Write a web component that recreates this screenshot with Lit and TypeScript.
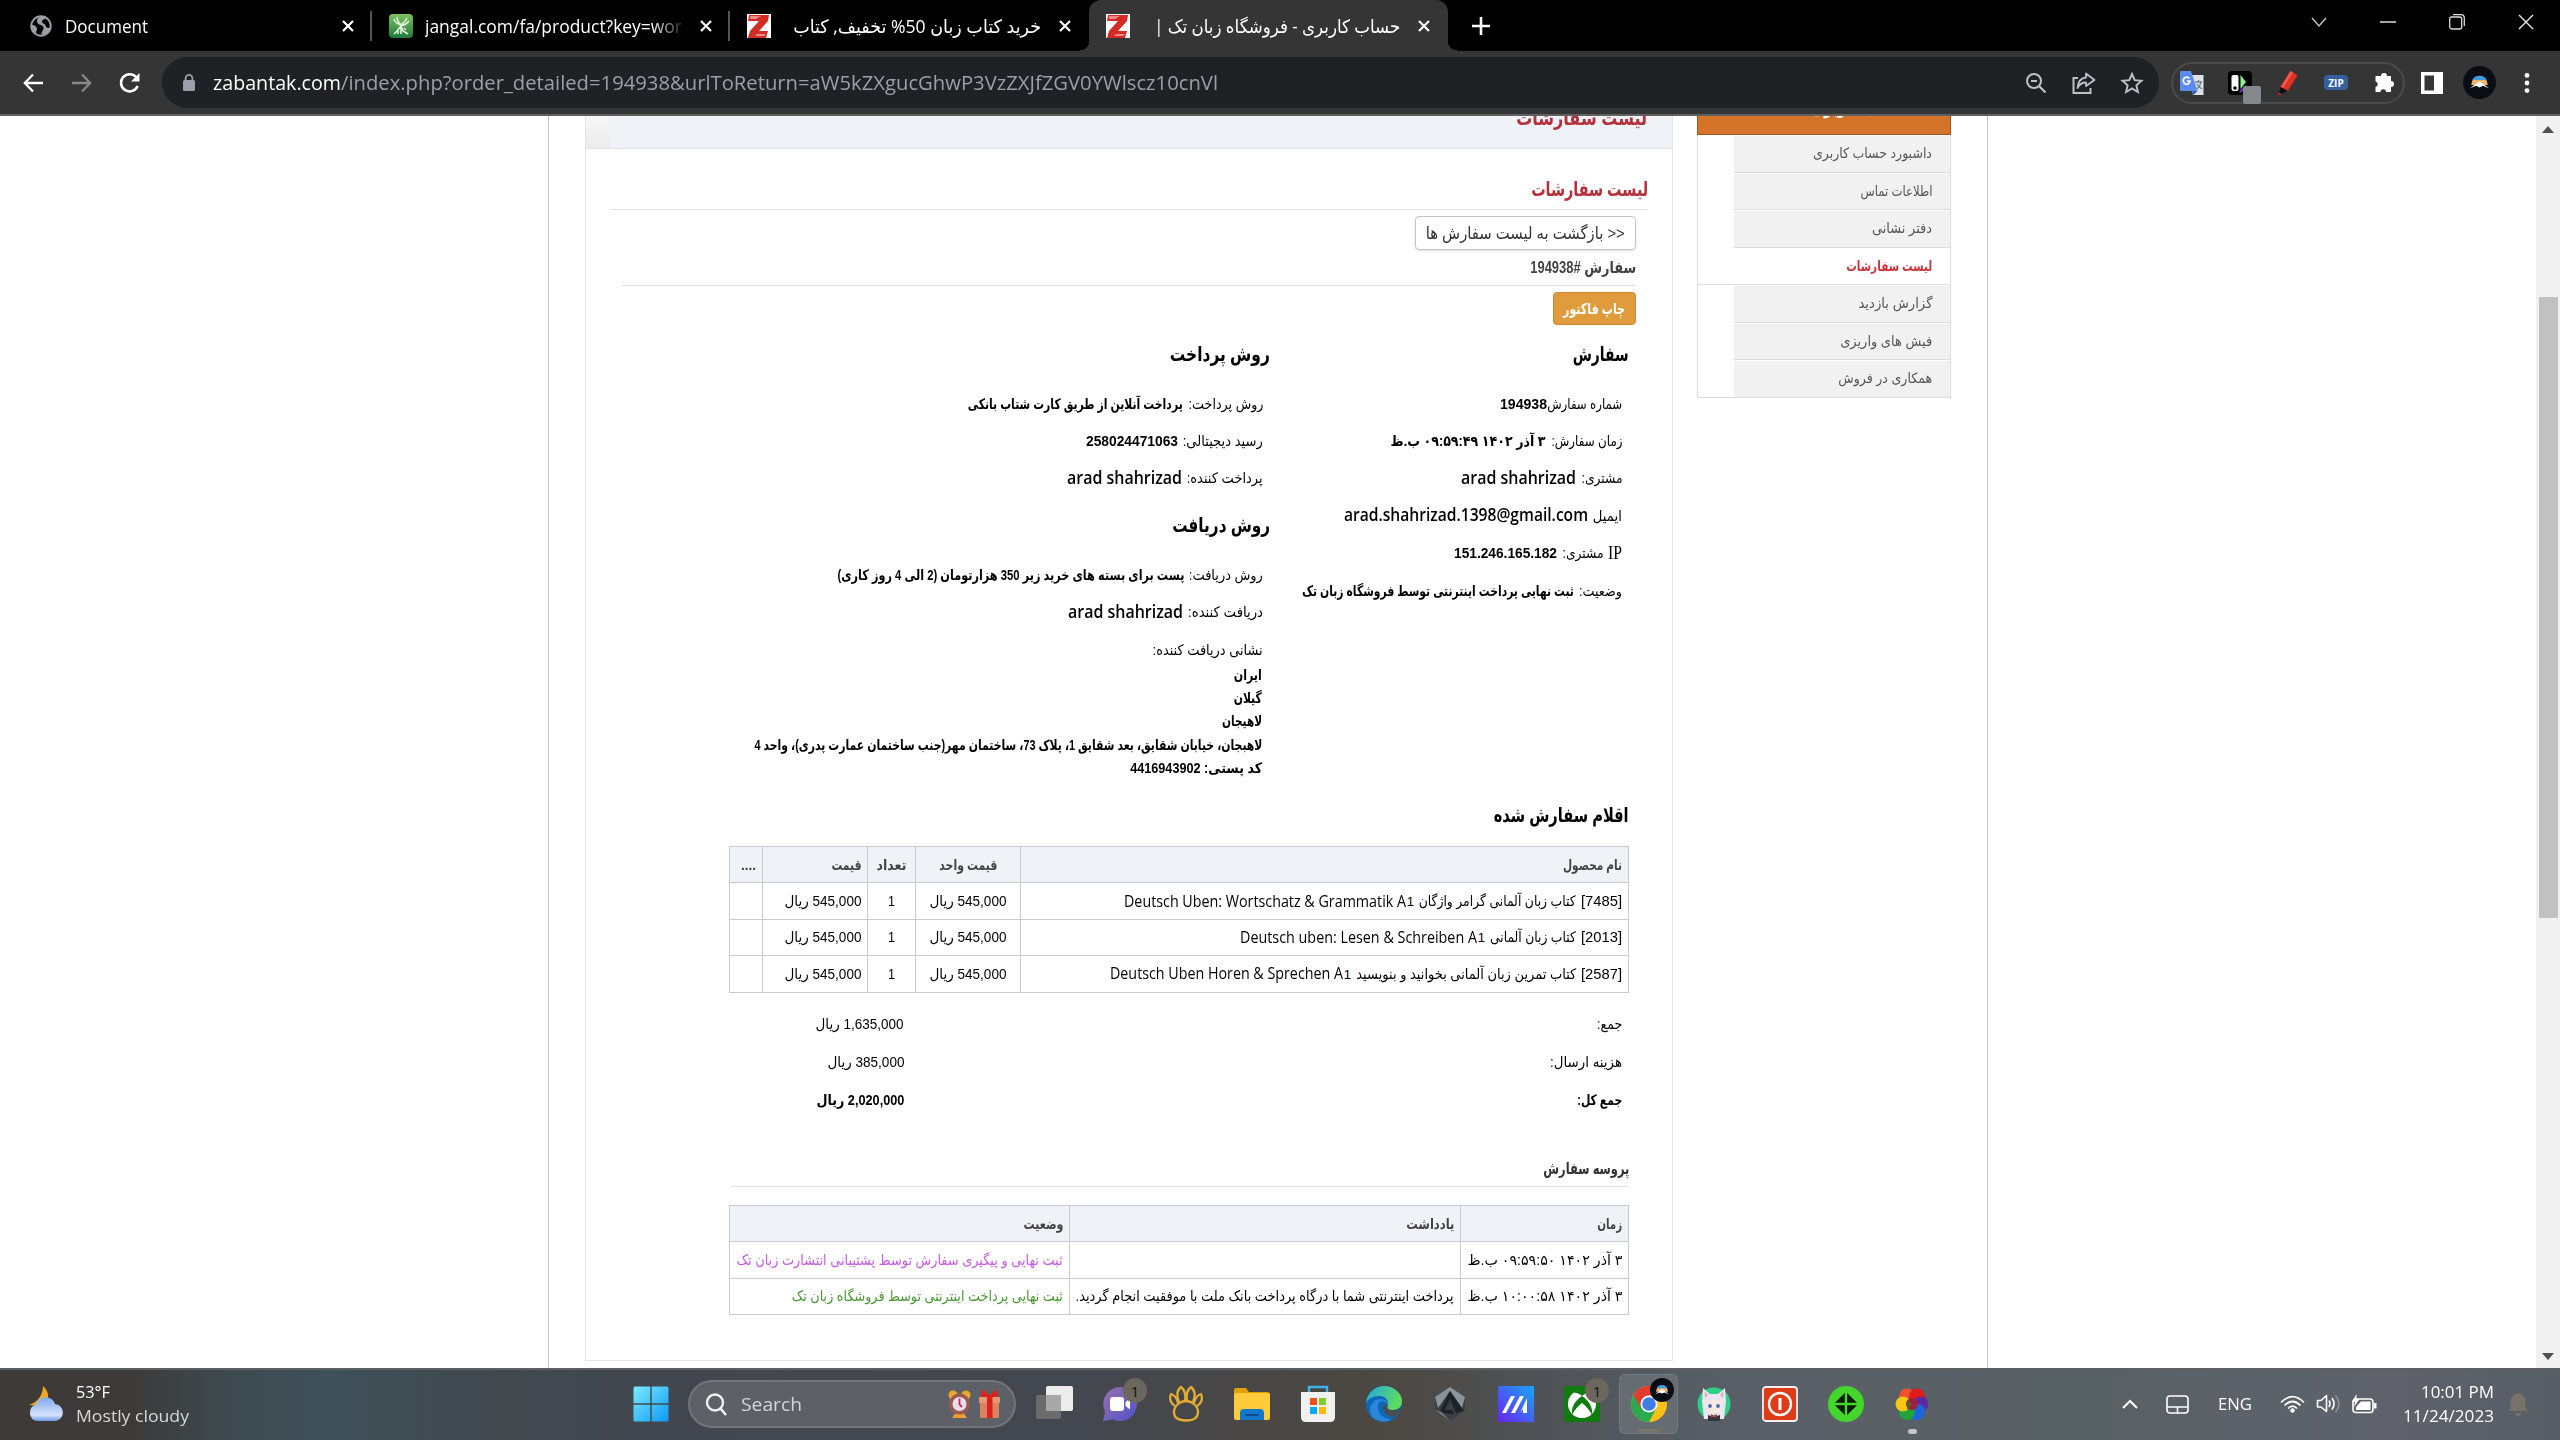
import { LitElement, html, css, svg, nothing } from "lit";
import { customElement, property, query } from "lit/decorators.js";

/** Text squeezed or stretched horizontally to an exact width. */
@customElement("fit-text")
class FitText extends LitElement {
  @property({ type: Number }) w = 0;
  @property() text = "";
  @query("span") inner!: HTMLSpanElement;
  static styles = css`
    :host { display: block; flex: none; white-space: nowrap; }
    span { display: inline-block; white-space: pre; transform-origin: 0 50%; }
    :host([dir="rtl"]) span { transform-origin: 100% 50%; }
  `;
  updated() {
    this.style.width = `${this.w}px`;
    this.fit();
    document.fonts.ready.then(() => this.fit());
  }
  fit() {
    this.inner.style.transform = "none";
    const n = this.inner.getBoundingClientRect().width;
    if (n > 0) this.inner.style.transform = `scaleX(${this.w / n})`;
  }
  render() { return html`<span>${this.text}</span>`; }
}

const fa = (text: string, w: number, cls = "") => html`<fit-text dir="rtl" class=${cls} .w=${w} .text=${text}></fit-text>`;
const en = (text: string, w: number, cls = "") => html`<fit-text dir="ltr" class=${cls} .w=${w} .text=${text}></fit-text>`;
const icon = (w: number, h: number, body: unknown, cls = "") =>
  html`<svg class="ic ${cls}" width=${w} height=${h} viewBox="0 0 ${w} ${h}" fill="none">${body}</svg>`;

const closeX = () => icon(14, 14, svg`<path d="M2 2L12 12M12 2L2 12" stroke="#fff" stroke-width="2.2"/>`);
const zLogo = () => icon(24, 24, svg`
  <rect width="24" height="24" fill="#fff"/>
  <path d="M2 1H22L21 7L12 17H21L19 24H1L3 17L12 7H1Z" fill="#d32b26"/>
  <path d="M3 2H14L9 5H3ZM10 20H19L17 22L8 22Z" fill="#f08a84"/>`);
const avatar = (r: number) => svg`
  <circle cx=${r} cy=${r} r=${r} fill="#0b0d14"/>
  <path d="M${r * 0.5} ${r * 1.15}A${r * 0.5} ${r * 0.55} 0 0 1 ${r * 1.5} ${r * 1.15}Z" fill="#efb36a"/>
  <path d="M${r * 0.56} ${r * 0.85}A${r * 0.5} ${r * 0.5} 0 0 1 ${r * 1.44} ${r * 0.85}Z" fill="#3f9be0"/>
  <path d="M${r * 0.42} ${r * 1.35}L${r} ${r * 0.92}L${r * 1.58} ${r * 1.35}L${r * 1.2} ${r * 1.2}L${r} ${r * 1.3}L${r * 0.8} ${r * 1.2}Z" fill="#fff"/>`;

const MENU: [string, number][] = [
  ["داشبورد حساب کاربری", 119], ["اطلاعات تماس", 72], ["دفتر نشانی", 60], ["لیست سفارشات", 86],
  ["گزارش بازدید", 74], ["فیش های واریزی", 92], ["همکاری در فروش", 94],
];

const ITEMS: [string, string, number, string, number][] = [
  ["[7485]", "کتاب زبان آلمانی گرامر واژگان", 157, "Deutsch Uben: Wortschatz & Grammatik A", 282],
  ["[2013]", "کتاب زبان آلمانی", 86, "Deutsch uben: Lesen & Schreiben A", 237],
  ["[2587]", "کتاب تمرین زبان آلمانی بخوانید و بنویسید", 220, "Deutsch Uben Horen & Sprechen A", 233],
];

@customElement("app-root")
class AppRoot extends LitElement {
  static styles = css`
    :host { display: block; width: 2560px; height: 1440px; overflow: hidden; background: #fff;
      font-family: "Liberation Sans", "DejaVu Sans", sans-serif; color: #000; }
    * { box-sizing: border-box; }
    .ic { display: block; flex: none; overflow: visible; }
    .screen { display: flex; flex-direction: column; height: 1440px; }
    .ui { font-family: "Open Sans", "DejaVu Sans", sans-serif; }

    /* tab strip */
    .tabs { height: 51px; background: #000; display: flex; align-items: stretch; color: #fff; padding-left: 12px; font-size: 18.5px; flex: none; }
    .tab { display: flex; align-items: center; width: 359px; padding: 0 17px 0 17px; flex: none; }
    .tab.first { width: 360px; }
    .tab.second { width: 358px; }
    .tab .grow { flex: 1; }
    .tab fit-text { margin-left: 12px; }
    .tab.sep { background: linear-gradient(#555, #555) right 0 top 11px / 2px 30px no-repeat; }
    .tab.fa fit-text { margin: 0 17px 0 0; }
    .tab.on { background: #353535; border-radius: 12px 12px 0 0; position: relative; }
    .tab.on::before, .tab.on::after { content: ""; position: absolute; bottom: 0; width: 9px; height: 10px; }
    .tab.on::before { left: -9px; background: radial-gradient(circle at 0 0, #0000 9px, #353535 9.5px); }
    .tab.on::after { right: -9px; background: radial-gradient(circle at 100% 0, #0000 9px, #353535 9.5px); }
    .fade { -webkit-mask-image: linear-gradient(90deg, #000 88%, #0002); }
    .plus { align-self: center; margin-left: 24px; }
    .wins { margin-left: auto; display: flex; align-items: center; gap: 53px; padding: 0 26px 7px 0; }

    /* toolbar */
    .bar { height: 65px; background: #353535; border-bottom: 2px solid #606060; display: flex; align-items: center; flex: none; }
    .nav { width: 162px; display: flex; padding-left: 23px; gap: 27px; flex: none; }
    .omni { width: 1997px; height: 51px; border-radius: 26px; background: #202124; display: flex; align-items: center; padding: 0 16px 0 20px; font-size: 20px; color: #9aa0a6; flex: none; }
    .omni .host { color: #fff; margin-left: 17px; }
    .omni .tools { margin-left: auto; display: flex; align-items: center; gap: 25px; }
    .ext { margin-left: 12px; width: 234px; height: 42px; border: 2px solid #4b4b4b; border-radius: 21px; display: flex; align-items: center; gap: 24px; padding-left: 7px; flex: none; }
    .zip { width: 24px; height: 15px; border-radius: 4px; background: #34609f; color: #fff; font-weight: 700; font-size: 10px; display: flex; align-items: center; justify-content: center; }
    .tail { display: flex; align-items: center; padding-left: 16px; gap: 20px; }
    .dots { margin-left: 8px; }

    /* page */
    .page { flex: 1; background: #fff; overflow: hidden; min-height: 0; display: flex; }
    .pagewrap { display: flex; width: 2560px; padding-left: 548px; }
    .frame { direction: rtl; width: 1440px; margin-right: auto; border: solid #c5c5cb; border-width: 0 1px; display: flex; padding-right: 36px; flex: none; }
    .scroll { width: 24px; background: #f1f1f1; display: flex; flex-direction: column; align-items: center; padding: 10px 0 8px; flex: none; }
    .thumb { width: 19px; height: 621px; background: #c1c1c1; margin: 164px 0 auto; }
    .side { width: 254px; height: 282px; border: 1px solid #dcdcdc; border-top: 0; margin-left: 24px; flex: none; }
    .sidehead { height: 19px; margin: 0 -1px; background: #d4732a; border: 1px solid #a0541a; border-top: 0; overflow: hidden; color: #fff; font-weight: 700; font-size: 18px; }
    .sidehead fit-text { margin: -19px 43px 0 0; line-height: 22px; }
    .mi { height: 37.5px; display: flex; align-items: center; padding: 0 18px 0 0; margin-left: 36px; background: #f1f1f1; border-bottom: 1px solid #dcdcdc; box-shadow: inset 0 1px #fff; font-size: 14px; color: #555; }
    .mi.sel { margin-left: 0; background: #fff; color: #cb3439; font-weight: 700; }
    .panel { width: 1088px; height: 1245px; border: 1px solid #e3e3ea; border-top: 0; display: flex; flex-direction: column; flex: none; }
    .phead { height: 33px; background: linear-gradient(#f7f7f7, #ebebeb) left / 24px 100% no-repeat, #eff3f7; border-bottom: 1px solid #e3e3ea; flex: none; padding-right: 25px; overflow: hidden; }
    .phead fit-text { margin-top: -10px; }
    .red { color: #b5303a; font-weight: 700; font-size: 20px; line-height: 24px; }
    .pt { height: 61px; margin: 0 24px 0 24px; border-bottom: 1px solid #e3e3e3; padding-top: 28px; flex: none; }
    .sub { margin: 6px 36px 0 36px; display: flex; flex-direction: column; align-items: flex-start; flex: none; }
    .btn { height: 34px; width: 221px; border: 1px solid #c4c4c4; border-radius: 4px; box-shadow: 0 1px 2px #0002; color: #333; display: flex; align-items: center; justify-content: center; font-size: 17px; }
    .ord { height: 36px; align-self: stretch; border-bottom: 1px solid #e3e3e3; padding-top: 7px; font-weight: 700; color: #444; font-size: 16px; line-height: 22px; }
    .print { width: 83px; height: 33px; margin-top: 6px; border: 1px solid #cd8730; border-radius: 4px; background: #e09b3d; color: #fff; font-weight: 700; font-size: 15px; display: flex; align-items: center; justify-content: center; }
    .body { margin: 0 43px 0 144px; flex: none; }
    .h { font-weight: 700; font-size: 20px; display: flex; align-items: center; height: 34px; padding-bottom: 2px; }
    .h.second { margin-top: 12px; }
    .cols { display: flex; height: 474px; padding-top: 13px; }
    .c1 { width: 359px; }
    .c2 { width: 540px; }
    .r { display: flex; align-items: center; height: 37.4px; padding-right: 7px; gap: 5px; font-size: 14.5px; }
    .r.tight { gap: 0; }
    .rows { padding-top: 13px; }
    .b { font-weight: 700; }
    .serif { font-family: "Liberation Serif", serif; font-size: 18px; }
    .lat { font-family: "Open Sans", sans-serif; font-weight: 600; font-size: 18px; padding-bottom: 3px; }
    .addr { margin-top: -5px; }
    .a { display: flex; align-items: center; height: 23.2px; padding-right: 8px; font-size: 14.5px; }
    table { border-collapse: collapse; table-layout: fixed; width: 899px; direction: rtl; font-size: 14.5px; }
    td, th { border: 1px solid #c8cace; padding: 0 6px; height: 36.4px; }
    th { background: #eff3f7; color: #444; font-weight: 700; }
    .cell { display: flex; align-items: center; gap: 5px; height: 24px; }
    .cell.mid { justify-content: center; }
    .cell .l { font-family: "Open Sans", sans-serif; font-size: 17px; padding-bottom: 2px; }
    .cell .cat { display: flex; direction: ltr; align-items: center; gap: 1px; }
    .one { font-size: 13px; padding-top: 1px; }
    .tot { display: grid; grid-template-columns: 718px auto; align-items: center; height: 37.8px; padding: 0 7px 0 0; font-size: 14.5px; }
    .proc { height: 50px; margin-top: 18px; margin-bottom: 18px; border-bottom: 1px solid #e3e3e3; font-weight: 700; font-size: 16px; color: #333; display: flex; align-items: center; padding-top: 15px; }
    .items { margin-top: 13px; }
    .totals { padding-top: 13px; }
    .v { color: #c858e6; }
    .g { color: #4a9632; }

    /* taskbar */
    .task { height: 72px; flex: none; border-top: 2px solid #5d6063; padding-bottom: 2px; color: #fff; display: flex; align-items: center;
      background: linear-gradient(90deg, #3e3a38 0, #3d3a39 130px, #3e4a50 230px, #3f5059 330px, #40494f 470px, #42464e 650px, #43474f 1080px, #4a4744 1280px, #4c4843 1400px, #4f5357 1540px, #596068 1750px, #586163 2080px, #5b626a 2260px, #5f626b 2400px, #565e66 2560px); }
    .wx { width: 618px; display: flex; align-items: center; padding-left: 28px; gap: 11px; font-size: 17px; line-height: 24px; color: #d8d8d8; flex: none; }
    .wx .t { color: #fff; }
    .cellt { width: 66px; height: 62px; display: flex; align-items: center; justify-content: center; position: relative; flex: none; }
    .search { width: 328px; height: 48px; margin: 0 5px 0 4px; border-radius: 24px; background: #5e6067; border: 2px solid #73757b; display: flex; align-items: center; padding: 0 14px 0 14px; font-size: 19px; color: #d5d5d5; flex: none; }
    .search fit-text { margin-left: 14px; }
    .search .pics { margin-left: auto; display: flex; gap: 8px; }
    .active { background: #666c72; border-radius: 6px; width: 59px; height: 60px; margin: 0 3px 0 4px; box-shadow: inset 0 0 0 1px #737980; }
    .badge { position: absolute; left: 36px; top: 5px; width: 24px; height: 25px; border-radius: 50%; background: #6b675c; color: #111; font-size: 15px; display: flex; align-items: center; justify-content: center; }
    .av { position: absolute; left: 31px; top: 4px; }
    .run { position: absolute; left: 18px; bottom: 1px; width: 23px; height: 4px; border-radius: 2px; background: #7a7568; }
    .dot { position: absolute; left: 29px; bottom: 1px; width: 9px; height: 5px; border-radius: 3px; background: #c3c6c8; }
    .tray { margin-left: auto; display: flex; align-items: center; padding-right: 32px; font-size: 17px; line-height: 24px; }
    .pad { margin-left: 28px; }
    .lang { margin: 0 28px 0 29px; }
    .vol { margin: 0 11px; }
    .clock { display: flex; flex-direction: column; align-items: flex-end; margin: 0 14px 0 26px; }
  `;

  tabs() {
    return html`<div class="tabs ui">
      <div class="tab first sep">
        ${icon(24, 24, svg`<circle cx="12" cy="12" r="9.700" stroke="#9aa0a6" stroke-width="2"/>
          <path d="M13 2.500C9 3 7 6 8.500 9C10 11.500 14 10.500 14.500 13.500C15 16 12 17.500 12.500 21L18 19.500L21.500 14C20 14 17 14 16.500 11.500C16 9.500 12.500 9.500 13 7C13.300 5.500 16 5.500 16.500 4ZM2.500 11C6 11 8 13 8 15C8 17 6.500 17.500 7 20L3 16Z" fill="#9aa0a6"/>`)}
        ${en("Document", 83)}<span class="grow"></span>${closeX()}
      </div>
      <div class="tab second sep">
        ${icon(24, 24, svg`<defs><linearGradient id="jg" x1="0" y1="0" x2="0" y2="1"><stop stop-color="#7dc35e"/><stop offset="1" stop-color="#1f7a3c"/></linearGradient></defs>
          <rect width="24" height="24" rx="4" fill="url(#jg)"/><path d="M5 5C6 9 9 10 12 11C14 9 16 8 18 4M8 3C8 7 10 9 12 11M20 7C18 10 15 11 12 12L8 17L5 20M12 12L14 17L19 20M12 12V20M9 15L9 20M15 14L17 16" stroke="#e9f6e2" stroke-width="1.500"/>`)}
        ${en("jangal.com/fa/product?key=wor", 257, "fade")}<span class="grow"></span>${closeX()}
      </div>
      <div class="tab fa">
        ${zLogo()}<span class="grow"></span>${fa("خرید کتاب زبان 50% تخفیف, کتاب", 248)}${closeX()}
      </div>
      <div class="tab fa on">
        ${zLogo()}<span class="grow"></span>${fa("حساب کاربری - فروشگاه زبان تک |", 246)}${closeX()}
      </div>
      <span class="plus">${icon(18, 18, svg`<path d="M9 0V18M0 9H18" stroke="#fff" stroke-width="2.600"/>`)}</span>
      <div class="wins">
        ${icon(16, 16, svg`<path d="M1 4L8 12L15 4" stroke="#ccc" stroke-width="1.300"/>`)}
        ${icon(16, 16, svg`<path d="M0 8H16" stroke="#fff" stroke-width="1.300"/>`)}
        ${icon(16, 16, svg`<rect x="0.700" y="3" width="12" height="12" rx="2" stroke="#ddd" stroke-width="1.300"/><path d="M4 .7H12Q15.300 .7 15.300 4V12" stroke="#ddd" stroke-width="1.300"/>`)}
        ${icon(16, 16, svg`<path d="M1 1L15 15M15 1L1 15" stroke="#eee" stroke-width="1.400"/>`)}
      </div>
    </div>`;
  }

  toolbar() {
    return html`<div class="bar ui">
      <div class="nav">
        ${icon(21, 20, svg`<path d="M20 10H2M10 1.500L1.800 10L10 18.500" stroke="#fff" stroke-width="2.300"/>`)}
        ${icon(21, 20, svg`<path d="M1 10H19M11 1.500L19.200 10L11 18.500" stroke="#888" stroke-width="2.300"/>`)}
        ${icon(21, 20, svg`<path d="M18.600 13A8.600 8.600 0 1 1 17 4" stroke="#fff" stroke-width="2.500"/><path d="M20.500 0V8.500H12Z" fill="#fff"/>`)}
      </div>
      <div class="omni">
        ${icon(14, 18, svg`<rect x="1" y="6" width="12" height="11" rx="1.500" fill="#9aa0a6"/><path d="M3.600 7V4.500A3.400 3.600 0 0 1 10.400 4.500V7" stroke="#9aa0a6" stroke-width="1.800"/>`)}
        ${en("zabantak.com", 128, "host")}${en("/index.php?order_detailed=194938&urlToReturn=aW5kZXgucGhwP3VzZXJfZGV0YWlscz10cnVl", 877)}
        <div class="tools">
          ${icon(22, 22, svg`<circle cx="9" cy="9" r="7" stroke="#bdc1c6" stroke-width="2"/><path d="M14 14L20.500 20.500M6 9H12" stroke="#bdc1c6" stroke-width="2.200"/>`)}
          ${icon(24, 22, svg`<path d="M6 6H1.500V21H18.500V16" stroke="#bdc1c6" stroke-width="2"/><path d="M14 1.500L22.500 8L14 14V10.500C10 10.500 7.500 12 5.500 16C6 9.500 9 6 14 5.500Z" stroke="#bdc1c6" stroke-width="1.800" stroke-linejoin="round"/>`)}
          ${icon(22, 22, svg`<path d="M11 2L13.700 8.200L20.500 8.800L15.400 13.300L16.900 20L11 16.400L5.100 20L6.600 13.300L1.500 8.800L8.300 8.200Z" stroke="#bdc1c6" stroke-width="1.900"/>`)}
        </div>
      </div>
      <div class="ext">
        ${icon(24, 24, svg`<path d="M9 4H23.500V24H13Z" fill="#dfe1e5"/><path d="M0 1Q0 0 1 0H11L17.500 20H1Q0 20 0 19Z" fill="#5b8def"/><path d="M12 20H17.500L13.500 24Z" fill="#2f5fc4"/>
          <path d="M9.300 7.400A3.400 3.600 0 1 0 10 10.200H7" stroke="#fff" stroke-width="1.700"/><path d="M15 11H22M18.500 9V11M21 11C20.500 15 18 17 17 18M17 13C18 15 20 17 22 18" stroke="#6a8088" stroke-width="1.300"/>`)}
        ${icon(24, 24, svg`<rect width="24" height="24" rx="4" fill="#000"/><rect x="3.500" y="4" width="7" height="16" rx="2" fill="#fff"/><circle cx="7" cy="17" r="1.800" fill="#000"/><path d="M12.500 4L18 11L12.500 18Z" fill="#8df08a"/><path d="M12 21L18 15" stroke="#8a2be2" stroke-width="2"/><rect x="15" y="15" width="18" height="18" rx="2" fill="#84888c"/>`)}
        ${icon(24, 24, svg`<path d="M14.500 0L21.500 4L12 20L4.500 16Z" fill="#e0301f"/><path d="M14.500 0L17 1.400L7 17.400L4.500 16Z" fill="#f2574a"/><path d="M5 16L11.500 20L5 23L3 21.500Z" fill="#111"/><path d="M3 22L6 23.500L2 24Z" fill="#e0301f"/>`)}
        <div class="zip">ZIP</div>
        ${icon(24, 24, svg`<path d="M9 5A3 3 0 0 1 15 5H19V10A3 3 0 0 1 19 16V21H14A2.700 2.700 0 0 0 8.500 21H3.500V16A2.800 2.800 0 0 0 3.500 10.500V5Z" fill="#fff"/>`)}
      </div>
      <div class="tail">
        ${icon(22, 22, svg`<path fill-rule="evenodd" d="M0 0H22V22H0ZM3.500 3.500V18.500H13V3.500Z" fill="#fff"/>`)}
        ${icon(33, 33, avatar(16.5))}
        ${icon(6, 20, svg`<circle cx="3" cy="2.400" r="2.400" fill="#fff"/><circle cx="3" cy="10" r="2.400" fill="#fff"/><circle cx="3" cy="17.600" r="2.400" fill="#fff"/>`, "dots")}
      </div>
    </div>`;
  }

  details() {
    return html`<div class="cols">
      <div class="c1">
        <div class="h">${fa("سفارش", 56)}</div>
        <div class="rows">
          <div class="r tight">${fa("شماره سفارش", 75)}${en("194938", 47, "b")}</div>
          <div class="r">${fa("زمان سفارش:", 71)}${fa("۳ آذر ۱۴۰۲ ۰۹:۵۹:۴۹ ب.ظ", 155, "b")}</div>
          <div class="r">${fa("مشتری:", 41)}${en("arad shahrizad", 115, "lat")}</div>
          <div class="r">${fa("ایمیل", 29)}${en("arad.shahrizad.1398@gmail.com", 244, "lat")}</div>
          <div class="r">${en("IP", 14, "serif")}${fa("مشتری:", 41)}${en("151.246.165.182", 103, "b")}</div>
          <div class="r">${fa("وضعیت:", 43)}${fa("ثبت نهایی پرداخت اینترنتی توسط فروشگاه زبان تک", 272, "b")}</div>
        </div>
      </div>
      <div class="c2">
        <div class="h">${fa("روش پرداخت", 100)}</div>
        <div class="rows">
          <div class="r">${fa("روش پرداخت:", 75)}${fa("پرداخت آنلاین از طریق کارت شتاب بانکی", 215, "b")}</div>
          <div class="r">${fa("رسید دیجیتالی:", 80)}${en("258024471063", 92, "b")}</div>
          <div class="r">${fa("پرداخت کننده:", 76)}${en("arad shahrizad", 115, "lat")}</div>
        </div>
        <div class="h second">${fa("روش دریافت", 98)}</div>
        <div class="rows">
          <div class="r">${fa("روش دریافت:", 74)}${fa("پست برای بسته های خرید زیر 350 هزارتومان (2 الی 4 روز کاری)", 347, "b")}</div>
          <div class="r">${fa("دریافت کننده:", 75)}${en("arad shahrizad", 115, "lat")}</div>
          <div class="r">${fa("نشانی دریافت کننده:", 110)}</div>
          <div class="addr">
            <div class="a b">${fa("ایران", 28)}</div>
            <div class="a b">${fa("گیلان", 28)}</div>
            <div class="a b">${fa("لاهیجان", 40)}</div>
            <div class="a b">${fa("لاهبجان، خیابان شقایق، بعد شقایق 1، پلاک 73، ساختمان مهر(جنب ساختمان عمارت پدری)، واحد 4", 508)}</div>
            <div class="a b">${fa("کد پستی: 4416943902", 132)}</div>
          </div>
        </div>
      </div>
    </div>`;
  }

  page() {
    return html`<div class="page"><div class="pagewrap">
      <div class="frame">
        <div class="side">
          <div class="sidehead">${fa("حساب کاربری", 96)}</div>
          ${MENU.map(([t, w], i) => html`<div class="mi ${i === 3 ? "sel" : ""}">${fa(t, w)}</div>`)}
        </div>
        <div class="panel">
          <div class="phead">${fa("لیست سفارشات", 131, "red")}</div>
          <div class="pt">${fa("لیست سفارشات", 117, "red")}</div>
          <div class="sub">
            <div class="btn">${fa("<< بازگشت به لیست سفارش ها", 199)}</div>
            <div class="ord">${fa("سفارش #194938", 106)}</div>
            <div class="print">${fa("چاپ فاکتور", 62)}</div>
          </div>
          <div class="body">
            ${this.details()}
            <div class="h">${fa("اقلام سفارش شده", 135)}</div>
            <table class="items">
              <colgroup><col style="width:608px"><col style="width:105px"><col style="width:48px"><col style="width:105px"><col style="width:33px"></colgroup>
              <tr>
                <th><div class="cell">${fa("نام محصول", 59)}</div></th>
                <th><div class="cell mid">${fa("قیمت واحد", 58)}</div></th>
                <th><div class="cell mid">${fa("تعداد", 30)}</div></th>
                <th><div class="cell">${fa("قیمت", 30)}</div></th>
                <th><div class="cell">${en("....", 15)}</div></th>
              </tr>
              ${ITEMS.map(([code, t, w, l, lw]) => html`<tr>
                <td><div class="cell">${en(code, 41)}${fa(t, w)}<span class="cat">${en(l, lw, "l")}<span class="one">1</span></span></div></td>
                <td><div class="cell mid">${fa("545,000 ریال", 77)}</div></td>
                <td><div class="cell mid">${en("1", 7)}</div></td>
                <td><div class="cell">${fa("545,000 ریال", 77)}</div></td>
                <td></td>
              </tr>`)}
            </table>
            <div class="totals">
              <div class="tot">${fa("جمع:", 25)}${fa("1,635,000 ریال", 88)}</div>
              <div class="tot">${fa("هزینه ارسال:", 72)}${fa("385,000 ریال", 77)}</div>
              <div class="tot b">${fa("جمع کل:", 45)}${fa("2,020,000 ریال", 88)}</div>
            </div>
            <div class="proc">${fa("پروسه سفارش", 86)}</div>
            <table>
              <colgroup><col style="width:168px"><col style="width:391px"><col style="width:340px"></colgroup>
              <tr>
                <th><div class="cell">${fa("زمان", 25)}</div></th>
                <th><div class="cell">${fa("یادداشت", 48)}</div></th>
                <th><div class="cell">${fa("وضعیت", 40)}</div></th>
              </tr>
              <tr>
                <td><div class="cell">${fa("۳ آذر ۱۴۰۲ ۰۹:۵۹:۵۰ ب.ظ", 155)}</div></td><td></td>
                <td><div class="cell v">${fa("ثبت نهایی و پیگیری سفارش توسط پشتیبانی انتشارت زبان تک", 326)}</div></td>
              </tr>
              <tr>
                <td><div class="cell">${fa("۳ آذر ۱۴۰۲ ۱۰:۰۰:۵۸ ب.ظ", 155)}</div></td>
                <td><div class="cell">${fa("پرداخت اینترنتی شما با درگاه پرداخت بانک ملت با موفقیت انجام گردید.", 378)}</div></td>
                <td><div class="cell g">${fa("ثبت نهایی پرداخت اینترنتی توسط فروشگاه زبان تک", 271)}</div></td>
              </tr>
            </table>
          </div>
        </div>
      </div>
      <div class="scroll">
        ${icon(12, 7, svg`<path d="M6 0L12 7H0Z" fill="#505050"/>`)}
        <div class="thumb"></div>
        ${icon(12, 7, svg`<path d="M6 7L12 0H0Z" fill="#505050"/>`)}
      </div>
    </div></div>`;
  }

  apps() {
    const cell = (body: unknown, extra: unknown = nothing) => html`<div class="cellt">${icon(36, 36, body)}${extra}</div>`;
    return html`
      ${cell(svg`<rect x="0" y="9" width="25" height="24" rx="2" fill="#6b6b6b"/><rect x="10" y="0" width="27" height="25" rx="2" fill="#ececec"/><rect x="10" y="9" width="15" height="16" fill="#a8a8a8"/>`)}
      ${cell(svg`<defs><linearGradient id="ch" x1="0" y1="0" x2="1" y2="1"><stop stop-color="#9a6fae"/><stop offset="1" stop-color="#4e55c8"/></linearGradient></defs>
        <path d="M18 1A17 17 0 1 1 11 33.500L1 35L3 25.500A17 17 0 0 1 18 1Z" fill="url(#ch)"/><rect x="8" y="11" width="14" height="14" rx="3" fill="#fff"/><path d="M23.500 16L28 12.500V23.500L23.500 20Z" fill="#fff"/>`, html`<span class="badge">1</span>`)}
      ${cell(svg`<g stroke="#e2ac35" stroke-width="2.300" stroke-linejoin="round"><path d="M18 15C24 15 30 20 30 26C30 32 25 34.500 18 34.500C11 34.500 6 32 6 26C6 20 12 15 18 15Z"/><path d="M7 20C2 17 1 12 3 8C7 9 9 13 10 17"/><path d="M29 20C34 17 35 12 33 8C29 9 27 13 26 17"/><path d="M11 16C8 10 9 4 13 1C17 4 18 9 17 15"/><path d="M25 16C28 10 27 4 23 1C19 4 18 9 19 15"/></g>`)}
      ${cell(svg`<path d="M0 4Q0 2 2 2H12L15 6H33Q36 6 36 9V14H0Z" fill="#e2a100"/><rect y="7" width="36" height="27" rx="2" fill="#fecb3b"/><path d="M6 34V27Q6 23 10 23H26Q30 23 30 27V34Z" fill="#1377cc"/><path d="M11 29H25" stroke="#0b4f8f" stroke-width="2"/>`)}
      ${cell(svg`<path d="M9 9V1H27V9" stroke="#39b3ea" stroke-width="2.400"/><path d="M1 6H35V31Q35 36 30 36H6Q1 36 1 31Z" fill="#f1f1f1"/><path d="M10 12H17V19H10Z" fill="#f1511b"/><path d="M19 12H26V19H19Z" fill="#80cc28"/><path d="M10 21H17V28H10Z" fill="#00adef"/><path d="M19 21H26V28H19Z" fill="#fbbc09"/>`)}
      ${cell(svg`<defs><linearGradient id="ed" x1="0" y1="0" x2="1" y2=".3"><stop stop-color="#1fa5e2"/><stop offset="1" stop-color="#5fdc60"/></linearGradient></defs>
        <circle cx="18" cy="18" r="18" fill="#0d66b8"/><path d="M0 17C1 7 9 0 18 0C29 0 36 8 36 15C36 21 32 24 27 24C22 24 20 22 22 19C23 14 19 10 13 10C7 10 2 13 0 17Z" fill="url(#ed)"/><path d="M12 19C11 26 16 33 25 33C21 37 12 36 7 32C0 24 6 13 14 13C19 13 23 16 22 19C19 14 13 14 12 19Z" fill="#2b86da"/><path d="M22 19C20 22 22 24 27 24C30 24 33 23 35 21C34 27 31 30 28 31C20 31 15 24 18 18Z" fill="#464d55"/>`)}
      ${cell(svg`<path d="M18 1L33 11V24L18 35L3 24V11Z" fill="#3a3f45"/><path d="M18 1L33 11L30 22L18 5L6 22L3 11Z" fill="#8b939c"/><path fill-rule="evenodd" d="M18 5L32 25L24 27L18 13L13 24H20L22 28L7 27Z" fill="#1e2226"/><path d="M3 24L10 26L18 35Z" fill="#6d757d"/>`)}
      ${cell(svg`<defs><linearGradient id="ma" x1="0" y1="1" x2="1" y2="0"><stop stop-color="#6a22f0"/><stop offset="1" stop-color="#16a7fb"/></linearGradient></defs>
        <rect width="36" height="36" fill="url(#ma)"/><path d="M4 27L13 10H17L8 27ZM13 27L22 10H26L17 27ZM22 27L29 12V27H25V23Z" fill="#fff"/>`)}
      ${cell(svg`<rect width="36" height="36" rx="2" fill="#107c10"/><circle cx="18" cy="18" r="14" fill="#fff"/><path d="M9 7C12 6 16 8 18 10C20 8 24 6 27 7C24 4 21 4 18 4C15 4 12 4 9 7Z" fill="#107c10"/><path d="M18 13C23 17 28 24 27.500 28C23 33 13 33 8.500 28C8 24 13 17 18 13Z" fill="#fff"/><path d="M18 10C10 15 7 23 8 28.500C10 25 14 20 18 17C22 20 26 25 28 28.500C29 23 26 15 18 10Z" fill="#107c10"/>`, html`<span class="badge">1</span>`)}
      <div class="cellt active">
        ${icon(36, 36, svg`<circle cx="18" cy="18" r="18" fill="#fbc116"/><path d="M18 18L2.400 9A18 18 0 0 0 18 36L25.500 22Z" fill="#2da94f"/><path d="M18 9H33.600A18 18 0 0 0 2.400 9L10.500 22.500Z" fill="#e33b2e"/><circle cx="18" cy="18" r="8.500" fill="#fff"/><circle cx="18" cy="18" r="6.800" fill="#3f7ee8"/>`)}
        <span class="av">${icon(24, 24, avatar(12))}</span><span class="run"></span>
      </div>
      ${cell(svg`<circle cx="18" cy="18" r="16.500" fill="#2fcf8a"/><path d="M7 2L14 8H22L29 2L30 15L28 33H22L18 28L14 33H8L6 15Z" fill="#e9e6f2"/><path d="M8.500 5L12 9L9 12ZM27.500 5L24 9L27 12Z" fill="#e4a8b8"/><path d="M11 16L18 13L25 16V22Q23 27 18 27Q13 27 11 22Z" fill="#fbe6e0"/><circle cx="14" cy="20" r="1.900" fill="#3b6fb5"/><circle cx="22" cy="20" r="1.900" fill="#3b6fb5"/><path d="M12 29L18 31L24 29V35H12Z" fill="#32333f"/><path d="M15 28L18 30L21 28V32L18 30L15 32Z" fill="#c9252b"/>`)}
      ${cell(svg`<rect x="1" y="1" width="34" height="34" rx="3" fill="#dd3c17" stroke="#f7f0ee" stroke-width="1.800"/><circle cx="18" cy="18" r="11" stroke="#fff" stroke-width="2.400"/><path d="M18 12V24" stroke="#fff" stroke-width="3"/>`)}
      ${cell(svg`<circle cx="18" cy="18" r="18" fill="#45d62c"/><path d="M16.800 7V16.800H7ZM19.200 7V16.800H29ZM16.800 29V19.200H7ZM19.200 29V19.200H29Z" fill="#0b1a08"/>`)}
      ${cell(svg`<circle cx="13" cy="10.500" r="8" fill="#f0502a"/><circle cx="23" cy="10.500" r="8" fill="#e01b1b"/><circle cx="27" cy="18" r="7.500" fill="#5a2a9e"/><circle cx="23" cy="26" r="8" fill="#1a66e0"/><circle cx="13" cy="26" r="8" fill="#21a33d"/><circle cx="9" cy="18" r="7.500" fill="#f6c915"/><circle cx="18" cy="18" r="6" fill="#a02040"/><path d="M14 14L18 18L13 24Z" fill="#4b6d20"/>`, html`<span class="dot"></span>`)}
    `;
  }

  taskbar() {
    return html`<div class="task ui">
      <div class="wx">
        ${icon(37, 36, svg`<path d="M15 0C22 6 22 15 14 20L1 19C10 16 15 9 15 0Z" fill="#f5a623"/><defs><linearGradient id="cl" x1="0" y1="0" x2="0" y2="1"><stop stop-color="#7fa8ee"/><stop offset=".75" stop-color="#d5e2fa"/><stop offset="1" stop-color="#6f99e6"/></linearGradient></defs><path d="M9 35A8.500 8.500 0 0 1 8 18.500A10 10 0 0 1 27 18A8.600 8.600 0 0 1 28 35Z" fill="url(#cl)"/>`)}
        <div>${en("53°F", 34, "t")}${en("Mostly cloudy", 113)}</div>
      </div>
      <div class="cellt">${icon(36, 36, svg`<defs><linearGradient id="wn" x1="0" y1="0" x2="1" y2="1"><stop stop-color="#7bebff"/><stop offset="1" stop-color="#0d98f5"/></linearGradient></defs><path d="M2 .5H17.300V17.300H.5V2Q.5 .5 2 .5ZM18.700 .5H34Q35.500 .5 35.500 2V17.300H18.700ZM.5 18.700H17.300V35.500H2Q.5 35.500 .5 34ZM18.700 18.700H35.500V34Q35.500 35.500 34 35.500H18.700Z" fill="url(#wn)"/>`)}</div>
      <div class="search">
        ${icon(23, 23, svg`<circle cx="11" cy="9.500" r="8" stroke="#f0f0f0" stroke-width="2.400"/><path d="M16.500 15.500L22 22" stroke="#f0f0f0" stroke-width="2.600"/>`)}
        ${en("Search", 61)}
        <div class="pics">
          ${icon(23, 28, svg`<circle cx="5" cy="5" r="4.500" fill="#e9a92c"/><circle cx="18" cy="5" r="4.500" fill="#e9a92c"/><path d="M4 28L8 22H15L19 28Z" fill="#e9a030"/><circle cx="11.500" cy="14" r="10.500" fill="#9a5a52"/><circle cx="11.500" cy="14" r="7" fill="#e4dff2"/><path d="M11.500 8.500V14.500L14 17" stroke="#d4283a" stroke-width="1.800"/>`)}
          ${icon(21, 28, svg`<rect x="1" y="12" width="19" height="16" fill="#d98460"/><rect y="7" width="21" height="6" rx="1" fill="#e59a74"/><rect x="8" y="6" width="5.500" height="22" fill="#e0201c"/><path d="M10.500 7L3 5L4 1ZM10.500 7L18 5L17 1Z" fill="#e0201c" stroke="#e0201c" stroke-width="2"/>`)}
        </div>
      </div>
      ${this.apps()}
      <div class="tray">
        ${icon(16, 10, svg`<path d="M1 9L8 2L15 9" stroke="#fff" stroke-width="2"/>`)}
        ${icon(23, 19, svg`<rect x="1" y="1" width="21" height="17" rx="3" stroke="#fff" stroke-width="1.600"/><path d="M1 12H22M11.500 12V18" stroke="#fff" stroke-width="1.600"/>`, "pad")}
        ${en("ENG", 34, "lang")}
        ${icon(25, 18, svg`<path d="M1 7.500Q12.500 -4 24 7.500M4.500 10.500Q12.500 2.500 20.500 10.500M8 13.500Q12.500 9 17 13.500" stroke="#fff" stroke-width="1.700"/><circle cx="12.500" cy="15.500" r="2.200" fill="#fff"/>`)}
        ${icon(25, 20, svg`<path d="M1.500 6.500H5L10.500 1.500V17.500L5 13H1.500Z" stroke="#fff" stroke-width="1.600" stroke-linejoin="round"/><path d="M13 6.500Q15 9.700 13 13M16 4Q20 9.700 16 15.500" stroke="#fff" stroke-width="1.600"/><path d="M19.500 1.500Q26.500 9.700 19.500 18" stroke="#8d9299" stroke-width="1.600"/>`, "vol")}
        ${icon(25, 20, svg`<rect x="1" y="5" width="20" height="13.500" rx="3" stroke="#fff" stroke-width="1.600"/><path d="M9 7.500H18.500V16H4V13Z" fill="#fff"/><path d="M22 9H24.500V14.500H22Z" fill="#fff"/><path d="M4.500 0L0 8H3L2 13L7.500 5H4.500Z" fill="#fff"/>`)}
        <div class="clock">${en("10:01 PM", 73)}${en("11/24/2023", 91)}</div>
        ${icon(20, 23, svg`<path d="M0 18L2.500 15V8.500A7.500 8 0 0 1 17.500 8.500V15L20 18ZM6.500 20H13.500Q12.500 23 10 23Q7.500 23 6.500 20Z" fill="#77726a"/>`)}
      </div>
    </div>`;
  }

  render() {
    return html`<div class="screen">${this.tabs()}${this.toolbar()}${this.page()}${this.taskbar()}</div>`;
  }
}
